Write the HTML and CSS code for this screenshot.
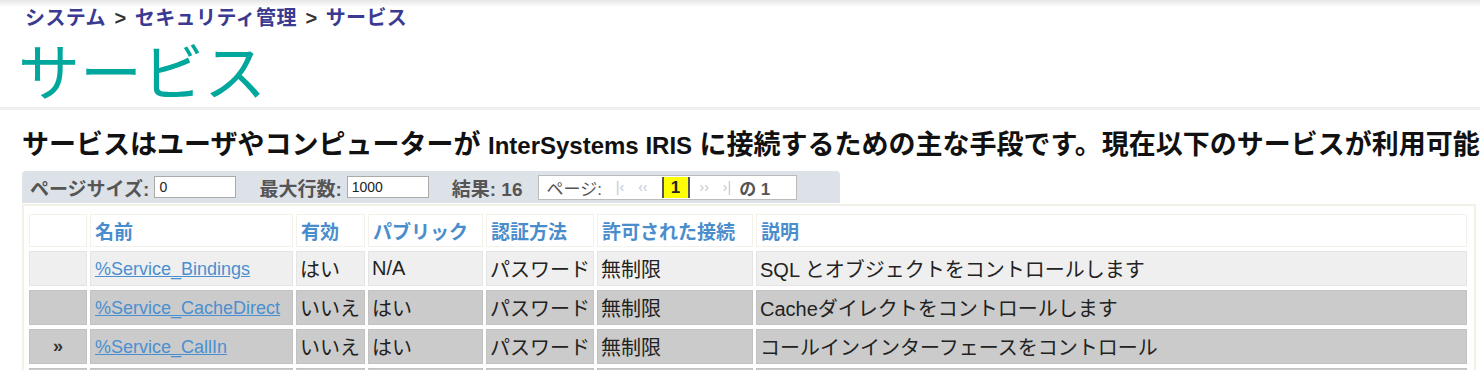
FILE: index.html
```html
<!DOCTYPE html>
<html lang="ja">
<head>
    <meta charset="UTF-8">
    <meta name="viewport" content="width=device-width, initial-scale=1.0">
    <title>サービス</title>
    <link rel="stylesheet" href="styles.css">
</head>
<body>
    <div class="header">
        <div class="breadcrumb">
            <a href="#">システム</a> <span class="sep">&gt;</span> <a href="#">セキュリティ管理</a> <span class="sep">&gt;</span> <a href="#">サービス</a>
        </div>
        <h1 class="title">サービス</h1>
    </div>

    <p class="intro">サービスはユーザやコンピューターが <span class="latin">InterSystems IRIS</span> に接続するための主な手段です。現在以下のサービスが利用可能です:</p>

    <div class="toolbar">
        <label>ページサイズ:</label>
        <input type="text" class="field" value="0">
        <label class="gap">最大行数:</label>
        <input type="text" class="field" value="1000">
        <span class="gap result">結果: 16</span>
        <div class="pager">
            <span class="pager-label">ページ:</span>
            <span class="nav">|‹</span>
            <span class="nav">‹‹</span>
            <span class="current">1</span>
            <span class="nav">››</span>
            <span class="nav">›|</span>
            <span class="total">の 1</span>
        </div>
    </div>

    <table class="services">
        <colgroup>
            <col style="width:58px">
            <col style="width:203px">
            <col style="width:69px">
            <col style="width:115px">
            <col style="width:108px">
            <col style="width:156px">
            <col>
        </colgroup>
        <thead>
            <tr>
                <th></th>
                <th>名前</th>
                <th>有効</th>
                <th>パブリック</th>
                <th>認証方法</th>
                <th>許可された接続</th>
                <th>説明</th>
            </tr>
        </thead>
        <tbody>
            <tr class="light">
                <td class="mark"></td>
                <td><a href="#">%Service_Bindings</a></td>
                <td>はい</td>
                <td>N/A</td>
                <td>パスワード</td>
                <td>無制限</td>
                <td>SQL とオブジェクトをコントロールします</td>
            </tr>
            <tr class="dark">
                <td class="mark"></td>
                <td><a href="#">%Service_CacheDirect</a></td>
                <td>いいえ</td>
                <td>はい</td>
                <td>パスワード</td>
                <td>無制限</td>
                <td>Cacheダイレクトをコントロールします</td>
            </tr>
            <tr class="dark">
                <td class="mark">»</td>
                <td><a href="#">%Service_CallIn</a></td>
                <td>いいえ</td>
                <td>はい</td>
                <td>パスワード</td>
                <td>無制限</td>
                <td>コールインインターフェースをコントロール</td>
            </tr>
            <tr class="dark">
                <td class="mark"></td>
                <td><a href="#">%Service_ComPort</a></td>
                <td>いいえ</td>
                <td>はい</td>
                <td>パスワード</td>
                <td>無制限</td>
                <td>COM ポートをコントロールします</td>
            </tr>
        </tbody>
    </table>
</body>
</html>
```

FILE: styles.css
```css
body {
    margin: 0;
    font-family: "Liberation Sans", "Noto Sans CJK JP", sans-serif;
    color: #222;
    background: #fff;
    overflow: hidden;
}
.header {
    height: 107px;
    border-bottom: 3px solid #efefef;
    background: linear-gradient(#e6e6e6, #fff 7px);
}
.breadcrumb {
    height: 34px;
    padding: 6px 0 0 25px;
    box-sizing: border-box;
    font-size: 20px;
    line-height: 24px;
    font-weight: bold;
    word-spacing: 3px;
}
.breadcrumb a {
    color: #3a3a92;
    text-decoration: none;
    letter-spacing: 0.4px;
}
.breadcrumb .sep {
    color: #333;
}
.title {
    margin: 10px 0 0 18px;
    font-size: 62px;
    line-height: 62px;
    font-weight: normal;
    color: #00a79d;
}
.intro {
    margin: 18px 0 0 22px;
    font-size: 27px;
    line-height: 34px;
    font-weight: bold;
    color: #111;
    white-space: nowrap;
}
.intro .latin {
    font-size: 24px;
}
.toolbar {
    margin: 8px 0 0 22px;
    width: 818px;
    height: 32px;
    box-sizing: border-box;
    padding-left: 8px;
    display: flex;
    align-items: center;
    background: #dde1e8;
    border-radius: 4px 4px 0 0;
    font-size: 19px;
    font-weight: bold;
    color: #555;
}
.toolbar .gap {
    margin-left: 23px;
}
.field {
    width: 82px;
    height: 22px;
    box-sizing: border-box;
    margin-left: 5px;
    padding: 1px 4px;
    border: 1px solid #aaa;
    font-family: "Liberation Sans", sans-serif;
    font-size: 14px;
    color: #222;
}
.result {
    color: #555;
}
.pager {
    margin-left: 16px;
    width: 259px;
    height: 25px;
    box-sizing: border-box;
    display: flex;
    align-items: center;
    background: #fff;
    border: 1px solid #bbb;
    padding-left: 7px;
    font-weight: normal;
    font-size: 17px;
}
.pager-label {
    color: #555;
    margin-right: 14px;
}
.nav {
    color: #c2c6cf;
    font-size: 14px;
    margin-right: 14px;
}
.current {
    display: inline-block;
    width: 24px;
    height: 21px;
    line-height: 21px;
    text-align: center;
    background: #ffff00;
    border-left: 2px solid #555;
    border-right: 2px solid #555;
    font-weight: bold;
    color: #222;
    margin-right: 10px;
}
.total {
    color: #555;
    font-weight: bold;
    margin-left: -6px;
}
.services {
    margin: 1px 0 0 22px;
    width: 1454px;
    table-layout: fixed;
    border-collapse: separate;
    border-spacing: 3px 4px;
    border: 2px solid #f1f1e8;
    padding: 4px 4px 0 2px;
    font-size: 20px;
}
.services th {
    height: 33px;
    box-sizing: border-box;
    padding: 0 4px;
    text-align: left;
    font-weight: bold;
    font-size: 19px;
    color: #4a8dcd;
    background: #fff;
    border: 1px solid #f2f2ea;
    white-space: nowrap;
    overflow: hidden;
}
.services td {
    height: 35px;
    box-sizing: border-box;
    padding: 0 3px;
    white-space: nowrap;
    overflow: hidden;
    color: #222;
}
.services tr.light td {
    background: #efefef;
    border: 1px solid #e4e4e4;
}
.services tr.dark td {
    background: #cbcbcb;
    border: 1px solid #c2c2c2;
}
.services a {
    font-family: "Liberation Sans", sans-serif;
    font-size: 18px;
    color: #4a8fd0;
    margin-left: 1px;
}
.services td.mark {
    text-align: center;
    font-weight: bold;
    font-size: 18px;
    color: #333;
}
```
